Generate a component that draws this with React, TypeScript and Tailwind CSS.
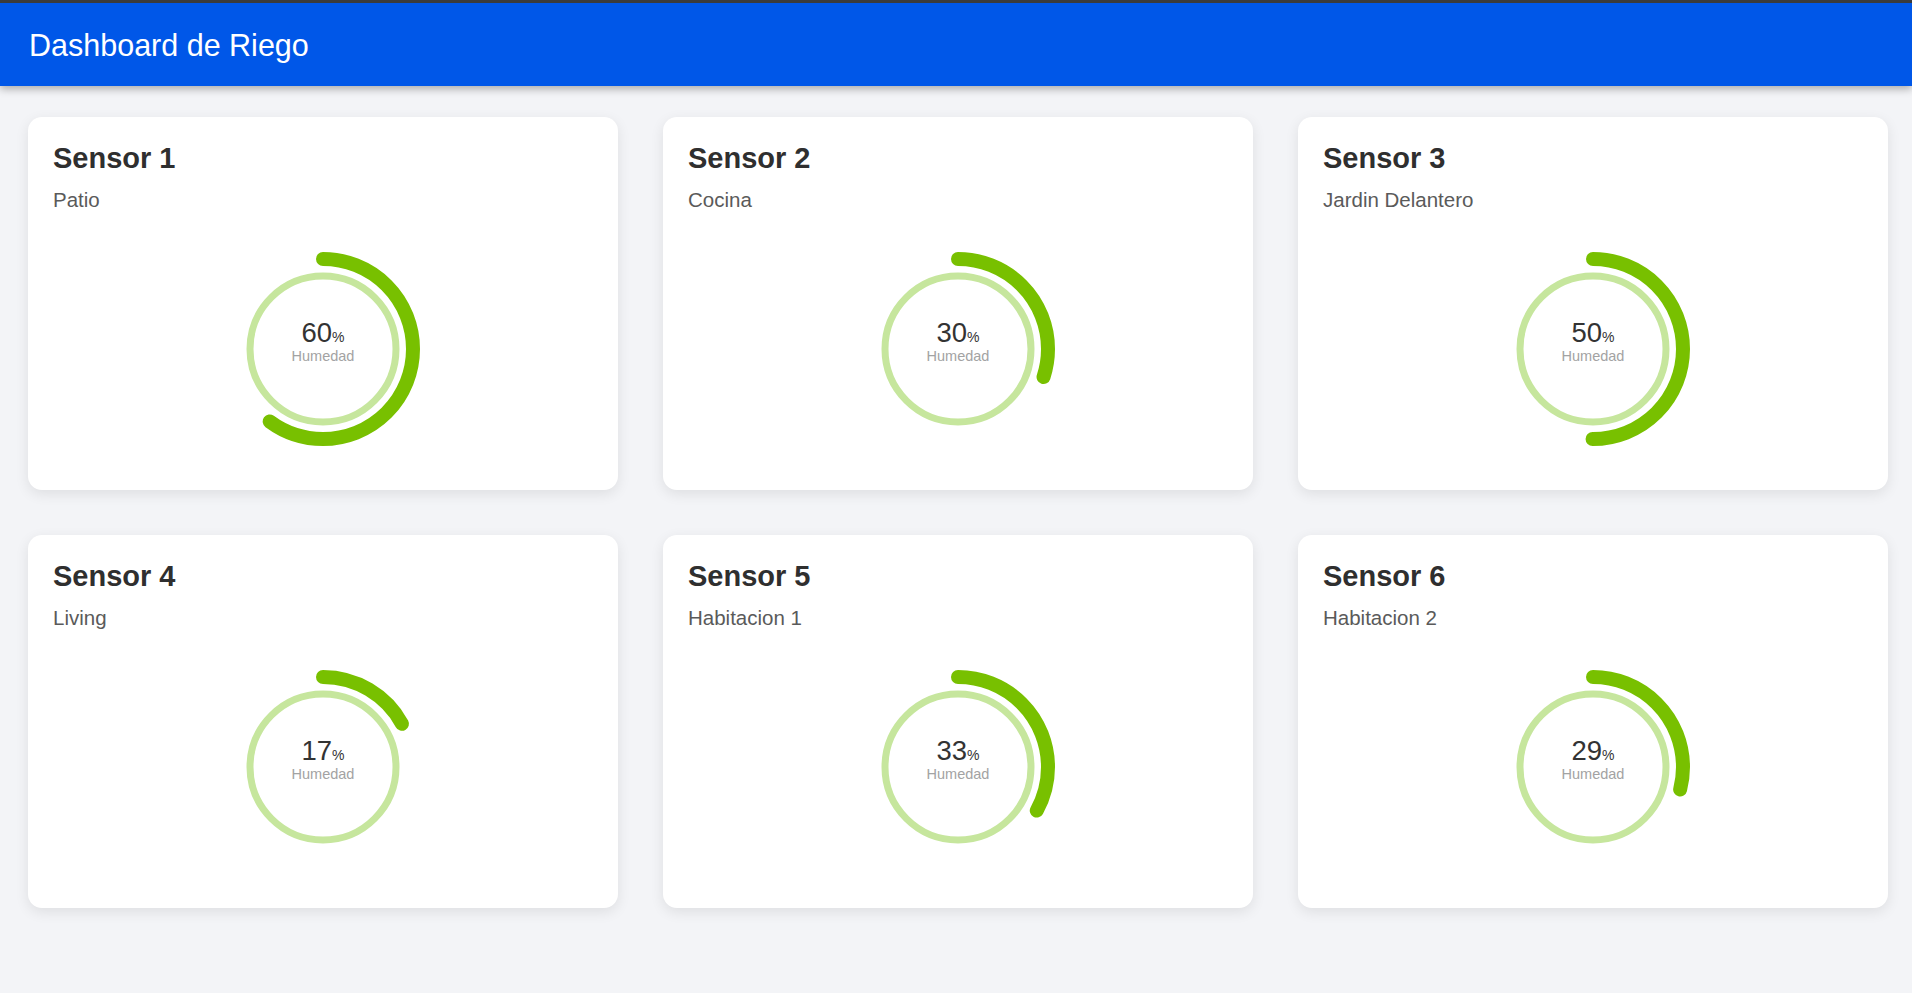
const sensors = [
  { name: "Sensor 1", place: "Patio", value: 60 },
  { name: "Sensor 2", place: "Cocina", value: 30 },
  { name: "Sensor 3", place: "Jardin Delantero", value: 50 },
  { name: "Sensor 4", place: "Living", value: 17 },
  { name: "Sensor 5", place: "Habitacion 1", value: 33 },
  { name: "Sensor 6", place: "Habitacion 2", value: 29 },
];

const Gauge = ({ value }: { value: number }) => {
  const r = 90;
  const c = 2 * Math.PI * r;
  return (
    <div className="relative w-[200px] h-[200px]">
      <svg width="200" height="200" viewBox="0 0 200 200">
        {/* track */}
        <circle cx="100" cy="100" r="73" fill="none" stroke="#c6e69d" strokeWidth="7" />
        {/* progress */}
        <circle
          cx="100"
          cy="100"
          r={r}
          fill="none"
          stroke="#78c000"
          strokeWidth="14"
          strokeLinecap="round"
          strokeDasharray={`${(c * value) / 100} ${c}`}
          transform="rotate(-90 100 100)"
        />
      </svg>
      <div className="absolute inset-0 flex flex-col items-center pt-[70px]">
        <div className="flex items-baseline leading-none text-[#333333]">
          <span className="text-[27.5px] leading-none">{value}</span>
          <span className="text-[14px] leading-none">%</span>
        </div>
        <span className="mt-[2px] text-[14.5px] leading-none text-[#a3a3a3]">Humedad</span>
      </div>
    </div>
  );
};

const SensorCard = ({ name, place, value }: { name: string; place: string; value: number }) => (
  <div className="bg-white rounded-[14px] shadow-[0_4px_14px_rgba(0,0,0,0.09)] px-[25px] pt-6 h-[373px] flex flex-col">
    <h2 className="text-[29px] leading-[34px] font-bold text-[#2f2f2f]">{name}</h2>
    <p className="mt-[13px] text-[20.5px] leading-6 text-[#5a5a5a]">{place}</p>
    <div className="flex justify-center mt-[37px]">
      <Gauge value={value} />
    </div>
  </div>
);

export default function App() {
  return (
    <div className="min-h-screen bg-[#f3f4f7] font-['Liberation_Sans',Arial,sans-serif]">
      <header className="border-t-[3px] border-[#3b3b3b] bg-[#0057e8] h-[86px] flex items-center pl-[29px] pt-[2px] shadow-[0_3px_8px_rgba(0,0,0,0.3)] relative z-10">
        <h1 className="text-white text-[30.5px] leading-none">Dashboard de Riego</h1>
      </header>
      <main className="grid grid-cols-3 gap-[45px] pl-[28px] pr-[24px] pt-[31px] pb-10">
        {sensors.map((s) => (
          <SensorCard key={s.name} {...s} />
        ))}
      </main>
    </div>
  );
}
